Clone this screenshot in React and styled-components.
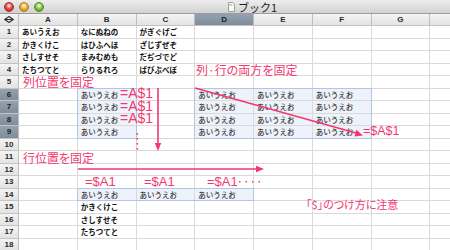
import React from 'react';
import styled, { createGlobalStyle } from 'styled-components';

const PINK = '#f4376f';
const COLS = ['A', 'B', 'C', 'D', 'E', 'F', 'G', 'H'];
const ROWS = Array.from({ length: 18 }, (_, i) => i + 1);

const CELLS = {
  A1: 'あいうえお', B1: 'なにぬねの', C1: 'がぎぐげご',
  A2: 'かきくけこ', B2: 'はひふへほ', C2: 'ざじずぜぞ',
  A3: 'さしすせそ', B3: 'まみむめも', C3: 'だぢづでど',
  A4: 'たちつてと', B4: 'らりるれろ', C4: 'ばびぶべぼ',
  B15: 'かきくけこ', B16: 'さしすせそ', B17: 'たちつてと',
};

// highlighted ranges: [colFrom, colTo, rowFrom, rowTo]
const RANGES = [
  [1, 1, 6, 9],
  [3, 5, 6, 9],
  [1, 3, 14, 14],
];

const inRange = (c, r) =>
  RANGES.some(([c0, c1, r0, r1]) => c >= c0 && c <= c1 && r >= r0 && r <= r1);

const NOTES = [
  { text: '列·行の両方を固定', x: 196, y: 63, size: 12, cjk: true },
  { text: '列位置を固定', x: 23, y: 75, size: 12, cjk: true },
  { text: '=A$1', x: 120, y: 86, size: 14 },
  { text: '=A$1', x: 120, y: 99, size: 14 },
  { text: '=A$1', x: 120, y: 111, size: 14 },
  { text: '=$A$1', x: 363, y: 125, size: 12.5 },
  { text: '行位置を固定', x: 23, y: 151, size: 12, cjk: true },
  { text: '=$A1', x: 85, y: 175, size: 13 },
  { text: '=$A1', x: 144, y: 175, size: 13 },
  { text: '=$A1', x: 207, y: 175, size: 13 },
  { text: '「$」のつけ方に注意', x: 306, y: 198, size: 11, cjk: true },
];

const GlobalStyle = createGlobalStyle`
  html, body {
    margin: 0;
    padding: 0;
    background: #ffffff;
    overflow: hidden;
  }
`;

const Window = styled.div`
  position: relative;
  width: 450px;
  height: 250px;
  overflow: hidden;
  background: #ffffff;
  font-family: 'Liberation Sans', Arial, sans-serif;
`;

const TitleBar = styled.div`
  height: 14px;
  box-sizing: border-box;
  display: flex;
  align-items: center;
  padding-left: 4px;
  background: linear-gradient(#ededed, #d2d2d2);
  border-bottom: 1px solid #9c9c9c;
`;

const Lights = styled.div`
  display: flex;
  gap: 5px;
`;

const Light = styled.span`
  width: 10px;
  height: 10px;
  border-radius: 50%;
  box-sizing: border-box;
  border: 1px solid ${p => p.$edge};
  background: radial-gradient(circle at 50% 35%, #ffffff 0, ${p => p.$color} 45%, ${p => p.$edge} 100%);
`;

const Title = styled.div`
  display: flex;
  align-items: center;
  gap: 3px;
  margin-left: 184px;
  font-family: 'Noto Sans CJK JP', sans-serif;
  font-size: 11px;
  line-height: 12px;
  color: #1a1a1a;
`;

const Sheet = styled.div`
  display: grid;
  grid-template-columns: 19px repeat(8, 58.75px);
  grid-template-rows: 12px repeat(18, 12.5px);
`;

const Head = styled.div`
  grid-column: ${p => p.$c};
  grid-row: ${p => p.$r};
  box-sizing: border-box;
  display: flex;
  align-items: center;
  justify-content: center;
  font-size: 8px;
  font-weight: bold;
  color: ${p => (p.$active ? '#17222e' : '#2a2a2a')};
  background: ${p => (p.$active ? 'linear-gradient(#95a1ae, #7f8c9a)' : 'linear-gradient(#f4f4f4, #e3e3e3)')};
  border-right: 1px solid #bdbdbd;
  border-bottom: 1px solid #c4c4c4;
`;

const Cell = styled.div`
  grid-column: ${p => p.$c};
  grid-row: ${p => p.$r};
  box-sizing: border-box;
  padding-left: 3px;
  font-family: 'Noto Sans CJK JP', sans-serif;
  font-size: 7.5px;
  line-height: 12px;
  font-weight: ${p => (p.$soft ? 500 : 700)};
  color: ${p => (p.$soft ? '#3a3a3a' : '#111111')};
  white-space: nowrap;
  overflow: hidden;
  background: ${p => (p.$sel ? '#edf2fb' : '#ffffff')};
  border-right: 1px solid #dadada;
  border-bottom: 1px solid #dadada;
`;

const RangeBox = styled.div`
  grid-column: ${p => p.$c};
  grid-row: ${p => p.$r};
  box-sizing: border-box;
  margin: -1px 0 0 -1px;
  border: 1px solid #b3c5e3;
  pointer-events: none;
`;

const Note = styled.span`
  position: absolute;
  white-space: nowrap;
  color: ${PINK};
  line-height: 1.1;
  font-family: ${p => (p.$cjk ? "'Noto Sans CJK JP', sans-serif" : "'Liberation Sans', Arial, sans-serif")};
  font-feature-settings: 'palt';
`;

const Arrows = styled.svg`
  position: absolute;
  left: 0;
  top: 0;
  pointer-events: none;
`;

const SelectAll = () => (
  <svg width="10" height="7" viewBox="0 0 10 7">
    <polygon points="5,0.6 9.2,3.5 5,6.4 0.8,3.5" fill="none" stroke="#333" strokeWidth="1.2" />
    <line x1="2" y1="3.5" x2="8" y2="3.5" stroke="#333" strokeWidth="1" />
  </svg>
);

const DocIcon = () => (
  <svg width="7" height="10" viewBox="0 0 7 10">
    <path d="M0.5 0.5 H4.8 L6.5 2.2 V9.5 H0.5 Z" fill="#fafafa" stroke="#8a8a8a" strokeWidth="0.8" />
    <rect x="1.3" y="2.5" width="3" height="1" fill="#7fb54a" />
  </svg>
);

const cellText = (c, r) => {
  if (inRange(c, r)) return 'あいうえお';
  return CELLS[`${COLS[c]}${r}`] || '';
};

export default function App() {
  return (
    <Window>
      <GlobalStyle />
      <TitleBar>
        <Lights>
          <Light $color="#e8493f" $edge="#a52a22" />
          <Light $color="#f0b33b" $edge="#b07715" />
          <Light $color="#86c646" $edge="#4c8a1e" />
        </Lights>
        <Title>
          <DocIcon />
          ブック1
        </Title>
      </TitleBar>

      <Sheet>
        <Head $c={1} $r={1}><SelectAll /></Head>
        {COLS.map((col, c) => (
          <Head key={col} $c={c + 2} $r={1} $active={col === 'D'}>{col}</Head>
        ))}
        {ROWS.map(r => (
          <React.Fragment key={r}>
            <Head $c={1} $r={r + 1} $active={r >= 6 && r <= 9}>{r}</Head>
            {COLS.map((col, c) => (
              <Cell key={col} $c={c + 2} $r={r + 1} $sel={inRange(c, r)} $soft={inRange(c, r)}>
                {cellText(c, r)}
              </Cell>
            ))}
          </React.Fragment>
        ))}
        {RANGES.map(([c0, c1, r0, r1], i) => (
          <RangeBox key={i} $c={`${c0 + 2} / ${c1 + 3}`} $r={`${r0 + 1} / ${r1 + 2}`} />
        ))}
      </Sheet>

      {NOTES.map((n, i) => (
        <Note key={i} $cjk={n.cjk} style={{ left: n.x, top: n.y, fontSize: n.size }}>
          {n.text}
        </Note>
      ))}

      <Arrows width="450" height="250" viewBox="0 0 450 250">
        <g stroke={PINK} strokeWidth="1.6" fill="none">
          <line x1="158" y1="88" x2="158" y2="145" />
          <line x1="78" y1="169" x2="257" y2="169" />
          <line x1="195" y1="88" x2="356" y2="133" />
        </g>
        <g fill={PINK}>
          <polygon points="158,151 154.8,143 161.2,143" />
          <polygon points="264,169 256,165.8 256,172.2" />
          <polygon points="363,135.5 354.5,136.5 356.3,129.8" />
          {[133, 138, 143, 148].map(y => (
            <rect key={y} x="136.5" y={y} width="1.6" height="1.6" />
          ))}
          {[239, 245.5, 252, 258.5].map(x => (
            <rect key={x} x={x} y="181" width="1.5" height="1.5" />
          ))}
        </g>
      </Arrows>
    </Window>
  );
}
